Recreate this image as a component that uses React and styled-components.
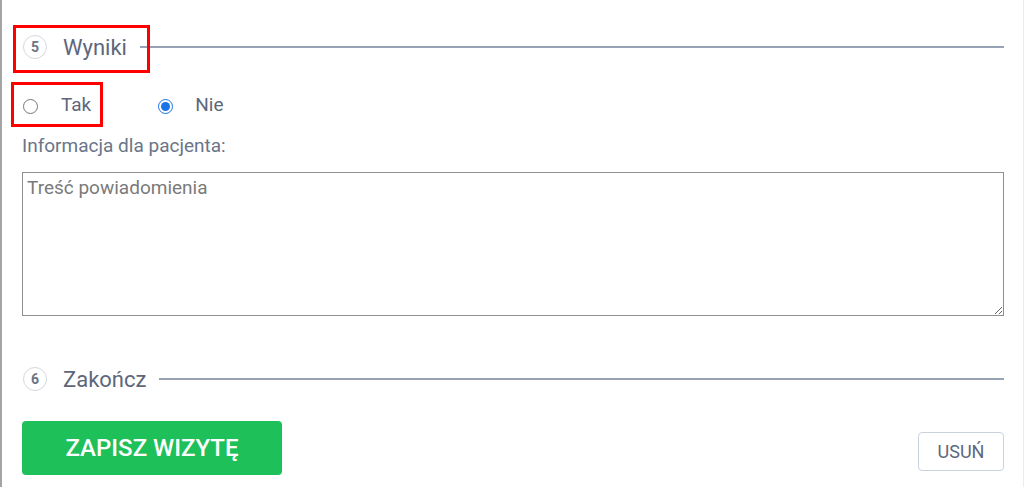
import { useState } from "react";
import styled, { createGlobalStyle } from "styled-components";

const GlobalStyle = createGlobalStyle`
  html, body {
    margin: 0;
    padding: 0;
    background: #ffffff;
    font-family: Roboto, "Liberation Sans", sans-serif;
  }
`;

const Page = styled.div`
  position: relative;
  box-sizing: border-box;
  width: 1024px;
  height: 487px;
  overflow: hidden;
  border-left: 2px solid #a4a4a4;
  border-right: 1px solid #ececec;
  padding: 35px 19px 0 20px;
`;

const SectionHead = styled.div`
  display: flex;
  align-items: center;
  height: 24px;
  margin-top: ${(p) => p.top || 0}px;
`;

const StepCircle = styled.span`
  box-sizing: border-box;
  width: 24px;
  height: 24px;
  margin-left: 1px;
  border: 1.5px solid #d3d8e0;
  border-radius: 50%;
  display: flex;
  align-items: center;
  justify-content: center;
  font-size: 14px;
  font-weight: 700;
  color: #6b7486;
`;

const SectionTitle = styled.span`
  margin-left: 16px;
  font-size: 22px;
  color: #5d677b;
`;

const Rule = styled.span`
  flex: 1;
  height: 2px;
  margin-left: 13px;
  background: #97a2b4;
`;

const RadioRow = styled.div`
  display: flex;
  align-items: center;
  height: 24px;
  margin-top: 35px;
`;

const RadioLabel = styled.label`
  display: flex;
  align-items: center;
  margin-left: ${(p) => p.offset || 0}px;
  font-size: 19px;
  color: #5d677b;
  cursor: pointer;

  input {
    margin: 0;
    width: 15px;
    height: 15px;
    accent-color: #1a73e8;
  }

  span {
    margin-left: ${(p) => p.gap || 24}px;
    margin-top: -4px;
  }
`;

const FieldLabel = styled.div`
  margin-top: 17px;
  line-height: 22px;
  font-size: 19px;
  color: #6a7588;
`;

const Notes = styled.textarea`
  display: block;
  box-sizing: border-box;
  width: 982px;
  height: 144px;
  margin-top: 15px;
  padding: 3px 4px;
  border: 1px solid #8f8f8f;
  border-radius: 0;
  font-family: Roboto, "Liberation Sans", sans-serif;
  font-size: 19px;
  color: #444;
  resize: vertical;

  &::placeholder {
    color: #7a7a7a;
  }
`;

const Actions = styled.div`
  display: flex;
  justify-content: space-between;
  align-items: flex-end;
  margin-top: 30px;
`;

const SaveButton = styled.button`
  width: 260px;
  height: 54px;
  border: none;
  border-radius: 4px;
  background: #1ec05a;
  color: #ffffff;
  font-family: Roboto, "Liberation Sans", sans-serif;
  font-size: 24px;
  font-weight: 500;
  cursor: pointer;
`;

const DeleteButton = styled.button`
  width: 86px;
  height: 39px;
  margin-bottom: 4px;
  padding: 0;
  border: 1px solid #cbd2dd;
  border-radius: 4px;
  background: #ffffff;
  color: #5d677b;
  font-family: Roboto, "Liberation Sans", sans-serif;
  font-size: 18px;
  cursor: pointer;
`;

// red annotation frames drawn on top of the form
const Highlight = styled.div`
  position: absolute;
  left: ${(p) => p.x}px;
  top: ${(p) => p.y}px;
  width: ${(p) => p.w}px;
  height: ${(p) => p.h}px;
  box-sizing: border-box;
  border: 3px solid #ff0000;
  pointer-events: none;
`;

function App() {
  const [results, setResults] = useState("nie");

  return (
    <Page>
      <GlobalStyle />
      <SectionHead>
        <StepCircle>5</StepCircle>
        <SectionTitle>Wyniki</SectionTitle>
        <Rule />
      </SectionHead>

      <RadioRow>
        <RadioLabel offset={1} gap={23}>
          <input
            type="radio"
            name="results"
            checked={results === "tak"}
            onChange={() => setResults("tak")}
          />
          <span>Tak</span>
        </RadioLabel>
        <RadioLabel offset={67} gap={22}>
          <input
            type="radio"
            name="results"
            checked={results === "nie"}
            onChange={() => setResults("nie")}
          />
          <span>Nie</span>
        </RadioLabel>
      </RadioRow>

      <FieldLabel>Informacja dla pacjenta:</FieldLabel>
      <Notes placeholder="Treść powiadomienia" />

      <SectionHead top={51}>
        <StepCircle>6</StepCircle>
        <SectionTitle>Zakończ</SectionTitle>
        <Rule />
      </SectionHead>

      <Actions>
        <SaveButton>ZAPISZ WIZYTĘ</SaveButton>
        <DeleteButton>USUŃ</DeleteButton>
      </Actions>

      <Highlight x={11} y={25} w={137} h={48} />
      <Highlight x={9} y={82} w={92} h={45} />
    </Page>
  );
}

export default App;
